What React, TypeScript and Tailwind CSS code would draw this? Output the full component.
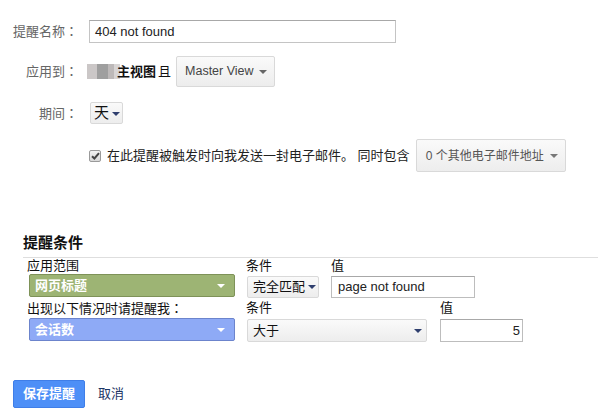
import React from 'react';

const font = "font-['Liberation_Sans','Noto_Sans_CJK_SC',sans-serif]";

function Caret({ color = '#555', className = '' }: { color?: string; className?: string }) {
  return (
    <svg width="8" height="4" viewBox="0 0 8 4" className={`shrink-0 ${className}`}>
      <polygon points="0,0 8,0 4,4" fill={color} />
    </svg>
  );
}

function GrayButton({
  children,
  className = '',
}: {
  children: React.ReactNode;
  className?: string;
}) {
  return (
    <div
      className={`flex shrink-0 items-center whitespace-nowrap rounded-[2px] border border-[#d9d9d9] bg-gradient-to-b from-[#fafafa] to-[#ededed] ${className}`}
    >
      {children}
    </div>
  );
}

// full-width colon, centred in its cell as in the reference
function Colon() {
  return <span className="font-['Noto_Sans_CJK_JP',sans-serif]">：</span>;
}

function Label({ children }: { children: React.ReactNode }) {
  return (
    <div className="w-[78px] shrink-0 whitespace-nowrap text-right text-[13px] leading-[16px] text-[#666]">
      {children}
      <Colon />
    </div>
  );
}

export default function App() {
  return (
    <div className={`w-[598px] h-[417px] overflow-hidden bg-white ${font}`}>
      {/* name */}
      <div className="mt-[20px] flex h-[23px] items-center">
        <Label>提醒名称</Label>
        <div className="ml-[11px] flex h-[23px] w-[307px] shrink-0 items-center border border-[#c4c4c4] border-t-[#a8a8a8] pl-[5px] text-[13px] text-[#222]">
          404 not found
        </div>
      </div>

      {/* apply to */}
      <div className="mt-[13px] flex h-[31px] items-center whitespace-nowrap">
        <Label>应用到</Label>
        <div className="ml-[9px] flex h-[15px] shrink-0 items-stretch self-center">
          <div className="w-[10px] bg-[#cbc7c7]" />
          <div className="w-[11px] bg-[#9f9f9f]" />
          <div className="w-[6px] bg-[#bdb9b9]" />
          <div className="w-[6px] bg-[#d8d5d5]" />
        </div>
        <span className="-ml-[3px] text-[13px] font-bold text-[#111]">主视图</span>
        <span className="ml-[2px] text-[13px] text-[#111]">且</span>
        <GrayButton className="ml-[5px] h-[31px] w-[99px] justify-between pl-[8px] pr-[7px]">
          <span className="text-[12.5px] text-[#444]">Master View</span>
          <Caret color="#666" />
        </GrayButton>
      </div>

      {/* period */}
      <div className="mt-[15px] flex h-[22px] items-center">
        <Label>期间</Label>
        <GrayButton className="ml-[12px] h-[22px] w-[33px] gap-[3px] border-[#c8c8c8] pl-[3px]">
          <span className="text-[15px] leading-[18px] text-[#111]">天</span>
          <Caret color="#2f3f6e" className="mt-[1px]" />
        </GrayButton>
      </div>

      {/* email */}
      <div className="mt-[15px] flex h-[33px] items-center whitespace-nowrap pl-[89px]">
        <div className="flex h-[12px] w-[12px] shrink-0 items-center justify-center rounded-[2px] border border-[#9a9a9a] bg-gradient-to-b from-[#f2f2f2] to-[#d8d8d8]">
          <svg width="9" height="8" viewBox="0 0 9 8">
            <path d="M1 4.2 L3.4 6.5 L8 1.2" stroke="#444" strokeWidth="2" fill="none" />
          </svg>
        </div>
        <span className="ml-[6px] text-[13px] text-[#222]">
          在此提醒被触发时向我发送一封电子邮件。 同时包含
        </span>
        <GrayButton className="ml-[6px] h-[33px] w-[150px] justify-between pl-[9px] pr-[7px]">
          <span className="text-[12px] text-[#555]">0 个其他电子邮件地址</span>
          <Caret color="#777" />
        </GrayButton>
      </div>

      {/* conditions */}
      <div className="ml-[23px] mt-[61px] flex h-[25px] items-start border-b border-[#dedede]">
        <span className="text-[15px] font-bold leading-[20px] text-[#111]">提醒条件</span>
      </div>

      <div className="flex h-[16px] items-center whitespace-nowrap text-[13px] leading-[16px] text-[#111]">
        <span className="ml-[27px] w-[219px] shrink-0">应用范围</span>
        <span className="w-[85px] shrink-0">条件</span>
        <span>值</span>
      </div>

      <div className="flex h-[24px] items-start whitespace-nowrap">
        <div className="ml-[29px] flex h-[23px] w-[206px] shrink-0 items-center justify-between rounded-[2px] border border-[#7e9258] bg-[#9db474] pl-[5px] pr-[9px]">
          <span className="text-[13px] font-bold text-white">网页标题</span>
          <Caret color="#fff" />
        </div>
        <GrayButton className="ml-[12px] mt-[2px] h-[22px] w-[72px] gap-[3px] border-[#bdbdbd] pl-[5px]">
          <span className="text-[13px] text-[#111]">完全匹配</span>
          <Caret color="#2f3f6e" />
        </GrayButton>
        <div className="ml-[12px] mt-[2px] flex h-[22px] w-[144px] shrink-0 items-center border border-[#bdbdbd] border-t-[#a8a8a8] pl-[6px] text-[13px] text-[#222]">
          page not found
        </div>
      </div>

      <div className="flex h-[20px] items-center whitespace-nowrap text-[13px] leading-[16px] text-[#111]">
        <span className="ml-[27px] w-[219px] shrink-0">
          出现以下情况时请提醒我
          <Colon />
        </span>
        <span className="w-[194px] shrink-0">条件</span>
        <span>值</span>
      </div>

      <div className="flex h-[24px] items-start whitespace-nowrap">
        <div className="ml-[29px] flex h-[23px] w-[206px] shrink-0 items-center justify-between rounded-[2px] border border-[#6c84cc] bg-[#8eaaf6] pl-[5px] pr-[9px]">
          <span className="text-[13px] font-bold text-white">会话数</span>
          <Caret color="#fff" />
        </div>
        <GrayButton className="ml-[12px] mt-[1px] h-[23px] w-[180px] justify-between border-[#bdbdbd] pl-[5px] pr-[4px]">
          <span className="text-[13px] text-[#111]">大于</span>
          <Caret color="#2f3f6e" />
        </GrayButton>
        <div className="ml-[13px] mt-[1px] flex h-[23px] w-[83px] shrink-0 items-center justify-end border border-[#bdbdbd] border-t-[#a8a8a8] pr-[2px] text-[13px] text-[#222]">
          5
        </div>
      </div>

      {/* actions */}
      <div className="mt-[38px] flex h-[28px] items-center">
        <div className="ml-[13px] flex h-[28px] w-[72px] shrink-0 items-center justify-center rounded-[2px] border border-[#3f7ee8] bg-[#4d8ff7] text-[13px] font-bold text-white">
          保存提醒
        </div>
        <span className="ml-[13px] text-[13px] text-[#1c3566]">取消</span>
      </div>
    </div>
  );
}
